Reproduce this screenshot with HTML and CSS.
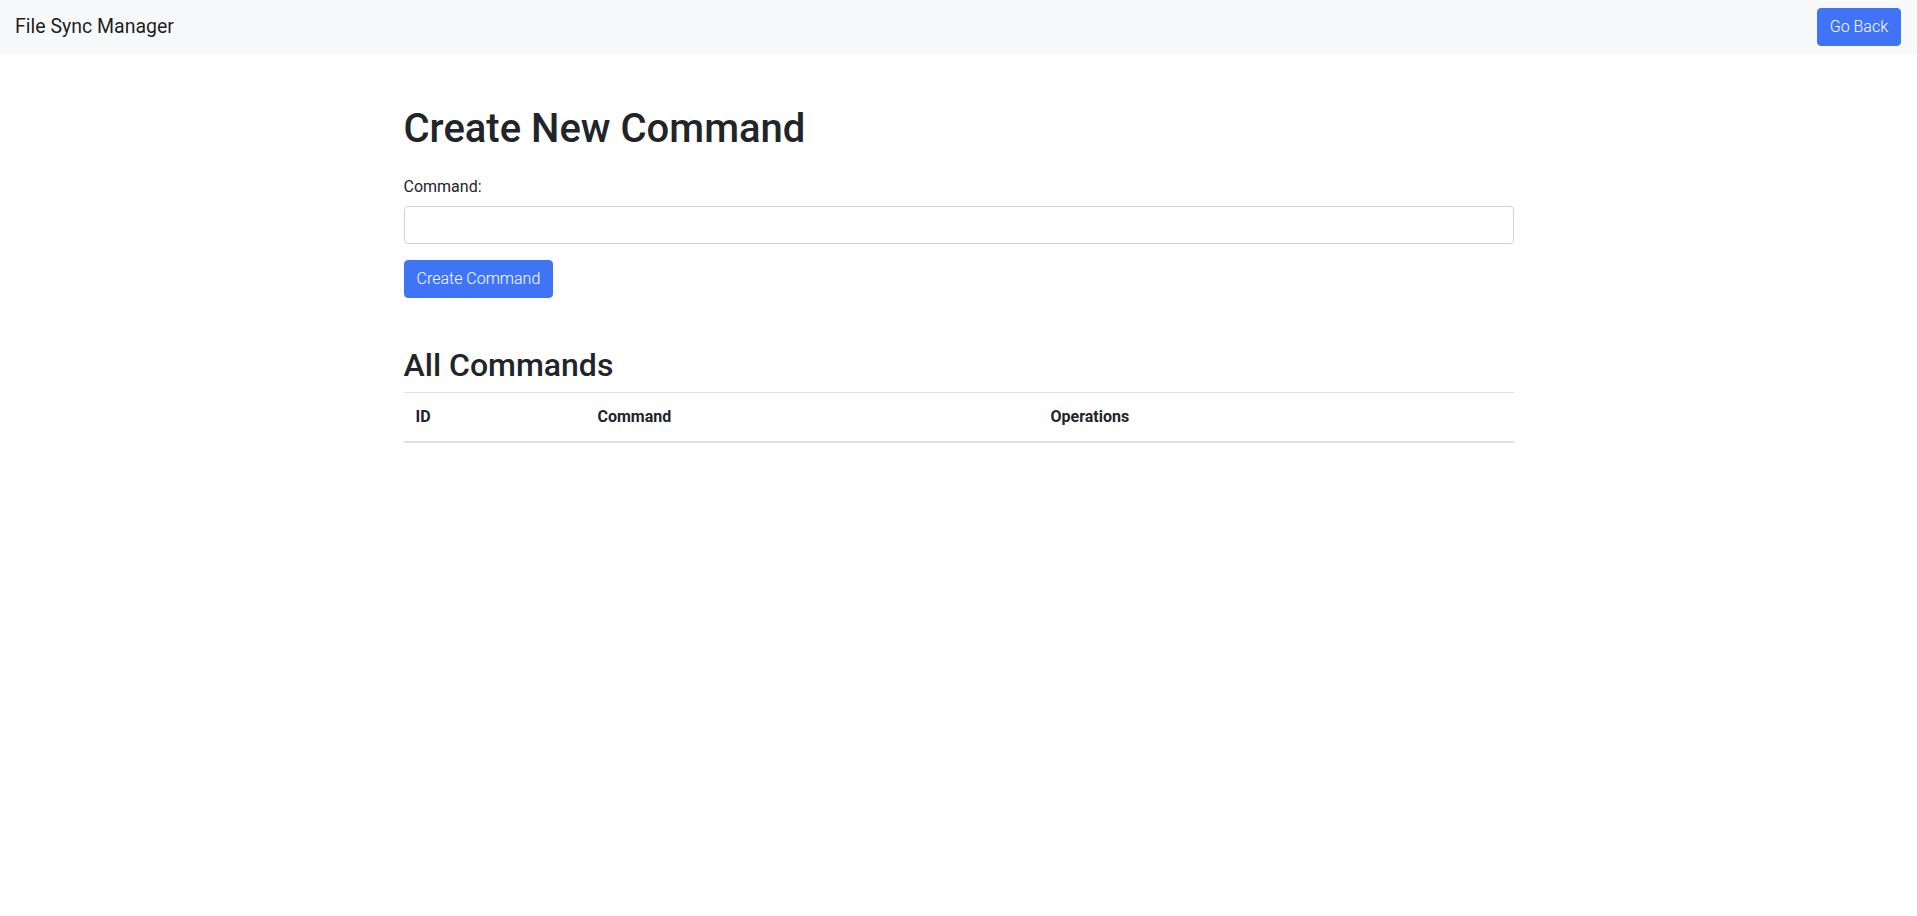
FILE: index.html
```html
<!DOCTYPE html>
<html lang="en">
<head>
<meta charset="utf-8">
<title>File Sync Manager</title>
<link rel="stylesheet" href="styles.css">
</head>
<body>
<nav class="navbar">
  <span class="brand">File Sync Manager</span>
  <button class="btn btn-primary" type="button">Go Back</button>
</nav>
<main class="container">
  <h1 class="title">Create New Command</h1>
  <form class="command-form">
    <div class="form-group">
      <label class="form-label" for="command">Command:</label>
      <input class="form-control" id="command" type="text">
    </div>
    <button class="btn btn-primary" type="button">Create Command</button>
  </form>
  <h2 class="subtitle">All Commands</h2>
  <table class="table">
    <thead>
      <tr>
        <th class="col-id">ID</th>
        <th class="col-command">Command</th>
        <th class="col-ops">Operations</th>
      </tr>
    </thead>
    <tbody></tbody>
  </table>
</main>
</body>
</html>
```
FILE: styles.css
```css
* { box-sizing: border-box; }

body {
  margin: 0;
  font-family: Roboto, "Noto Sans", sans-serif;
  font-size: 16px;
  line-height: 1.5;
  color: #212529;
  background: #ffffff;
}

.navbar {
  display: flex;
  justify-content: space-between;
  align-items: center;
  padding: 8px 16px 8px 15px;
  background: #f8f9fa;
}

.brand {
  font-size: 19.5px;
  line-height: 30px;
  color: rgba(0, 0, 0, 0.9);
}

.btn {
  display: inline-block;
  font-family: inherit;
  font-size: 16px;
  font-weight: 300;
  line-height: 24px;
  padding: 6px 12px;
  border: 1px solid transparent;
  border-radius: 4px;
  cursor: pointer;
}

.btn-primary {
  background: #3f74f6;
  border-color: #3f74f6;
  color: #ffffff;
}

.container {
  width: 1140px;
  margin: 48px auto 0;
  padding: 0 15px;
}

.title {
  font-size: 40px;
  line-height: 1.2;
  font-weight: 500;
  padding-top: 3px;
  margin: 0 0 21px;
}

.form-group {
  margin-bottom: 16px;
}

.form-label {
  display: block;
  margin-bottom: 8px;
  padding-top: 1px;
  line-height: 23px;
}

.form-control {
  display: block;
  width: 100%;
  height: 38px;
  padding: 6px 12px;
  font-family: inherit;
  font-size: 16px;
  border: 1px solid #ced4da;
  border-radius: 4px;
  background: #ffffff;
}

.subtitle {
  font-size: 32px;
  line-height: 1.2;
  font-weight: 500;
  padding-top: 1px;
  margin: 47px 0 8px;
}

.table {
  width: 100%;
  border-collapse: collapse;
}

.table th {
  text-align: left;
  padding: 12px;
  font-weight: 700;
  border-top: 1px solid #dee2e6;
  border-bottom: 2px solid #dee2e6;
}

.col-id { width: 182px; }
.col-command { width: 453px; }
.col-ops { width: 475px; }
```
